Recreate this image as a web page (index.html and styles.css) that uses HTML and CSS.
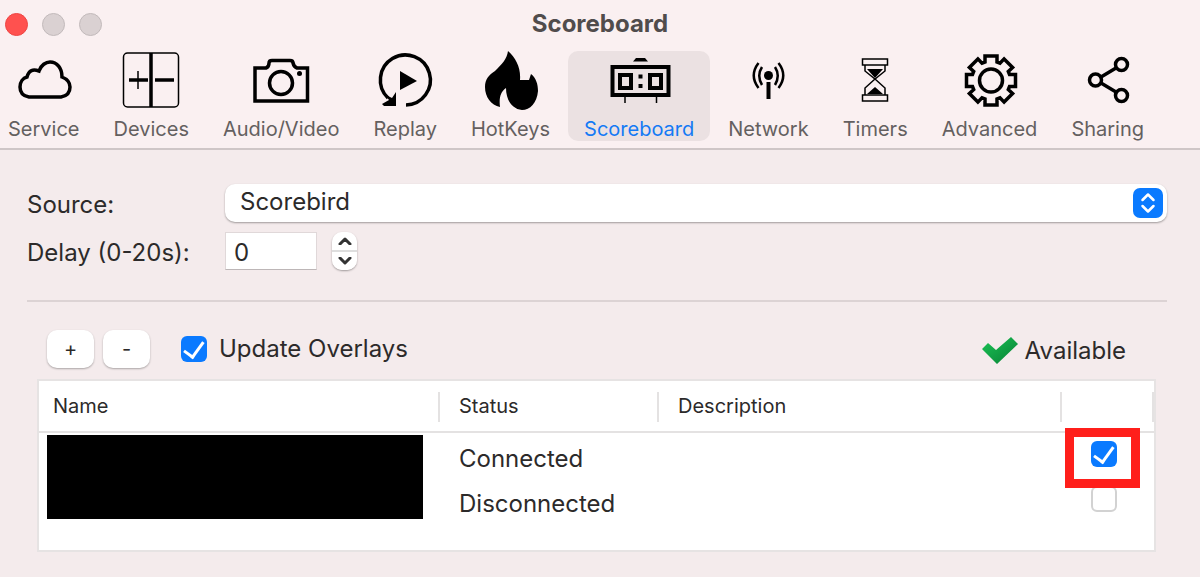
FILE: index.html
```html
<!DOCTYPE html>
<html lang="en">
  <head>
    <meta charset="UTF-8" />
    <meta name="viewport" content="width=device-width, initial-scale=1.0" />
    <title>Scoreboard</title>
    <link rel="stylesheet" href="styles.css" />
  </head>
  <body>
    <header class="window-header">
      <div class="title-bar">
        <div class="window-controls">
          <button class="dot dot-close" type="button" aria-label="Close"></button>
          <button class="dot" type="button" aria-label="Minimize"></button>
          <button class="dot" type="button" aria-label="Zoom"></button>
        </div>
        <h1 class="window-title">Scoreboard</h1>
      </div>

      <nav class="tabs">
        <a class="tab" href="#service">
          <svg class="tab-icon" viewBox="0 0 60 60">
            <path class="line" d="M15 46C9 45 6 41 6 36C6 31 9 27 13 26C15 19 19 18 25 20C27 14 32 11 36 11C43 11 48 17 48 26C53 28 56 31 56 36C56 42 53 45 47 46Z" />
          </svg>
          <span>Service</span>
        </a>
        <a class="tab" href="#devices">
          <svg class="tab-icon" viewBox="0 0 60 60">
            <rect class="line thin" x="2.5" y="2" width="55" height="54" rx="4" />
            <path class="line" d="M30 2V56M8 29H27M34 29H53" />
            <path class="line thin" d="M17 20V38" />
          </svg>
          <span>Devices</span>
        </a>
        <a class="tab" href="#audio-video">
          <svg class="tab-icon" viewBox="0 0 60 60">
            <path class="line" d="M4 17H15Q18 16 18 12Q18 9.500 21 9.500H39Q42 9.500 42 12Q43 16 46 17H56.500V50H4Z" />
            <circle class="line" cx="30" cy="32" r="11.500" />
            <circle cx="48.500" cy="22.500" r="2.500" />
          </svg>
          <span>Audio/Video</span>
        </a>
        <a class="tab" href="#replay">
          <svg class="tab-icon" viewBox="0 0 60 60">
            <path class="line" d="M31 54A25 25 0 1 0 13 47" />
            <path d="M7 53L14 49L9 43L17 47L21 41V55H9Z" />
            <path d="M25 20L42 30L25 39Z" />
          </svg>
          <span>Replay</span>
        </a>
        <a class="tab" href="#hotkeys">
          <svg class="tab-icon" viewBox="0 0 60 60">
            <path d="M27 0C35 7 40 17 39 29H48L50 23C55 27 57 33 57 40C56 52 49 59 41 59C31 58 25 49 25 37C19 41 18 48 19 56C10 54 4 46 4 36C4 28 8 24 14 20C21 13 26 8 27 0Z" />
          </svg>
          <span>HotKeys</span>
        </a>
        <a class="tab tab-active" href="#scoreboard" aria-current="page">
          <svg class="tab-icon" viewBox="0 0 60 60">
            <path d="M24 10.500L27 7H36L39 10.500Z" />
            <rect class="line thick" x="3.500" y="16" width="56" height="28" />
            <rect class="line thick" x="11" y="24" width="11" height="13" />
            <rect class="line thick" x="41" y="24" width="11" height="13" />
            <path d="M29.500 23.500h4v4h-4zM29.500 33h4v4h-4z" />
            <path class="line thin" d="M16 46V52M47.500 46V52" />
          </svg>
          <span>Scoreboard</span>
        </a>
        <a class="tab" href="#network">
          <svg class="tab-icon" viewBox="0 0 60 60">
            <circle cx="30.500" cy="24.500" r="4.500" />
            <rect x="28.500" y="31" width="4" height="17" />
            <path class="line medium" d="M24 16Q18.500 24.500 24 34M37 16Q42.500 24.500 37 34M20.500 12Q11 24.500 20.500 37M40.500 12Q50 24.500 40.500 37" />
          </svg>
          <span>Network</span>
        </a>
        <a class="tab" href="#timers">
          <svg class="tab-icon" viewBox="0 0 60 60">
            <path class="line thin" d="M17.500 8H42.500V14H17.500ZM20 14V20L30 28L40 20V14M30 28L20 37V44M30 28L40 37V44M17.500 50V44H42.500V50Z" />
            <path d="M22 18H38L30 27ZM22 43L30 36L38 43Z" />
          </svg>
          <span>Timers</span>
        </a>
        <a class="tab" href="#advanced">
          <svg class="tab-icon" viewBox="0 0 60 60">
            <g transform="translate(31 29.500)">
              <path class="line" d="M-6-24.500H6V-18.500L9-17.300L13.100-21.600L21.600-13.100L17.300-9L18.500-6H24.500V6H18.500L17.300 9L21.600 13.100L13.100 21.600L9 17.300L6 18.500V24.500H-6V18.500L-9 17.300L-13.100 21.600L-21.600 13.100L-17.300 9L-18.500 6H-24.500V-6H-18.500L-17.300-9L-21.600-13.100L-13.100-21.600L-9-17.300L-6-18.500Z" />
              <circle class="line" r="11.500" />
            </g>
          </svg>
          <span>Advanced</span>
        </a>
        <a class="tab" href="#sharing">
          <svg class="tab-icon" viewBox="0 0 60 60">
            <circle class="line" cx="17.500" cy="29" r="6" />
            <circle class="line" cx="43.500" cy="13.500" r="6" />
            <circle class="line" cx="43.500" cy="44.500" r="6" />
            <path class="line" d="M23 26L38 17M23 32L38 41" />
          </svg>
          <span>Sharing</span>
        </a>
      </nav>
    </header>

    <main class="content">
      <form class="settings">
        <label class="settings-label" for="source">Source:</label>
        <div class="select-wrap">
          <select class="select" id="source">
            <option>Scorebird</option>
          </select>
          <svg class="select-arrows" viewBox="0 0 30 30">
            <path d="M9.500 12L15 6.500L20.500 12M9.500 18L15 23.500L20.500 18" />
          </svg>
        </div>

        <label class="settings-label" for="delay">Delay (0-20s):</label>
        <div class="delay">
          <input class="delay-input" id="delay" type="text" value="0" />
          <div class="stepper">
            <button class="stepper-btn" type="button" aria-label="Increase">
              <svg viewBox="0 0 14 8"><path d="M2 7L7 2L12 7" /></svg>
            </button>
            <button class="stepper-btn" type="button" aria-label="Decrease">
              <svg viewBox="0 0 14 8"><path d="M2 1L7 6L12 1" /></svg>
            </button>
          </div>
        </div>
      </form>

      <section class="overlays">
        <div class="overlay-bar">
          <button class="small-btn" type="button">+</button>
          <button class="small-btn" type="button">-</button>
          <label class="update-label">
            <input class="checkbox" type="checkbox" checked />
            Update Overlays
          </label>
          <div class="availability">
            <svg class="available-icon" viewBox="0 0 36 28">
              <defs>
                <linearGradient id="green" x1="0" y1="0" x2="1" y2="1">
                  <stop offset="0" stop-color="#1bc455" />
                  <stop offset="1" stop-color="#087f35" />
                </linearGradient>
              </defs>
              <path fill="url(#green)" d="M0 12L6 6L14 13L29 0L36 7L15 27Z" />
            </svg>
            <span>Available</span>
          </div>
        </div>

        <div class="table-box">
          <table class="devices">
            <thead>
              <tr>
                <th class="col-name">Name</th>
                <th class="col-status">Status</th>
                <th>Description</th>
                <th class="col-check"></th>
              </tr>
            </thead>
            <tbody>
              <tr>
                <td class="name-cell" rowspan="2"><div class="redacted"></div></td>
                <td class="status-cell">Connected</td>
                <td></td>
                <td class="check-cell">
                  <input class="checkbox" type="checkbox" aria-label="Use connected device" checked />
                  <div class="highlight"></div>
                </td>
              </tr>
              <tr>
                <td class="status-cell">Disconnected</td>
                <td></td>
                <td class="check-cell">
                  <input class="checkbox" type="checkbox" aria-label="Use disconnected device" />
                </td>
              </tr>
            </tbody>
          </table>
        </div>
      </section>
    </main>
  </body>
</html>
```
FILE: styles.css
```css
:root {
  --clr-header: #faf0f1;
  --clr-bg: #f4ebec;
  --clr-text: #2c2a2a;
  --clr-muted: #646060;
  --clr-line: #e4e2e2;
  --clr-blue: #0a7aff;
}

* {
  margin: 0;
  padding: 0;
  box-sizing: border-box;
}

body {
  font-family: Inter, "Helvetica Neue", sans-serif;
  font-size: 24px;
  line-height: 30px;
  background-color: var(--clr-bg);
  color: var(--clr-text);
  min-height: 100vh;
}

button,
input,
select {
  font: inherit;
  color: inherit;
  border: 0;
}

/* title bar and tabs */
.window-header {
  background-color: var(--clr-header);
  border-bottom: 2px solid #cfc6c7;
  padding-bottom: 7px;
}

.title-bar {
  display: grid;
  grid-template-columns: 1fr auto 1fr;
  align-items: center;
  height: 51px;
  padding: 0 5px 3px;
}

.window-controls {
  display: flex;
  gap: 14px;
}

.dot {
  width: 23px;
  height: 23px;
  border-radius: 50%;
  background-color: #dad1d2;
  border: 1px solid #c2babb;
}

.dot-close {
  background-color: #ff514f;
  border-color: #ee4543;
}

.window-title {
  font-size: 24px;
  font-weight: 700;
  color: #504c4c;
}

.tabs {
  display: flex;
  gap: 34px;
  padding: 0 8px;
}

.tab {
  display: flex;
  flex-direction: column;
  align-items: center;
  gap: 6px;
  font-size: 20px;
  line-height: 24px;
  color: var(--clr-muted);
  text-decoration: none;
}

.tab-active {
  background-color: #ebe1e2;
  color: #147af5;
  border-radius: 10px;
  padding: 0 16px;
  margin: 0 -16px;
}

.tab-icon {
  width: 60px;
  height: 60px;
  overflow: visible;
  fill: #000;
}

.line {
  fill: none;
  stroke: #000;
  stroke-width: 3.5;
}

.thin {
  stroke-width: 1.5;
}

.medium {
  stroke-width: 2.5;
}

.thick {
  stroke-width: 4;
}

/* source and delay */
.content {
  padding: 34px 33px 24px 27px;
}

.settings {
  display: grid;
  grid-template-columns: 198px 1fr;
  row-gap: 10px;
  padding-bottom: 30px;
  border-bottom: 2px solid #dcd3d4;
}

.settings-label {
  line-height: 34px;
  padding-top: 4px;
}

.select-wrap {
  position: relative;
  height: 38px;
}

.select {
  appearance: none;
  width: 100%;
  height: 38px;
  padding: 0 48px 2px 15px;
  background-color: #fff;
  border-radius: 10px;
  box-shadow: 0 1px 2px rgba(0, 0, 0, 0.35);
}

.select-arrows {
  position: absolute;
  top: 4px;
  right: 4px;
  width: 30px;
  height: 30px;
  border-radius: 7px;
  background-color: var(--clr-blue);
  fill: none;
  stroke: #fff;
  stroke-width: 2.5;
  stroke-linecap: round;
  stroke-linejoin: round;
  pointer-events: none;
}

.delay {
  display: flex;
  gap: 15px;
}

.delay-input {
  width: 92px;
  height: 38px;
  padding: 2px 8px 0;
  background-color: #fff;
  border: 1px solid #e0d8d9;
  border-bottom-color: #bdb6b7;
}

.stepper {
  display: flex;
  flex-direction: column;
  width: 25px;
  height: 38px;
  border-radius: 10px;
  overflow: hidden;
  box-shadow: 0 1px 2px rgba(0, 0, 0, 0.35);
}

.stepper-btn {
  flex: 1;
  display: flex;
  justify-content: center;
  align-items: center;
  background-color: #fff;
}

.stepper-btn + .stepper-btn {
  border-top: 2px solid #dedede;
}

.stepper-btn svg {
  width: 14px;
  height: 8px;
  fill: none;
  stroke: #333;
  stroke-width: 3;
  stroke-linecap: round;
  stroke-linejoin: round;
}

/* overlays */
.overlays {
  padding: 28px 11px 0 10px;
}

.overlay-bar {
  display: flex;
  align-items: center;
  gap: 9px;
  padding: 0 30px 11px 10px;
}

.small-btn {
  width: 47px;
  height: 38px;
  font-size: 20px;
  background-color: #fff;
  border-radius: 10px;
  box-shadow: 0 1px 2px rgba(0, 0, 0, 0.3);
}

.update-label {
  display: flex;
  align-items: center;
  gap: 12px;
  margin-left: 22px;
}

.checkbox {
  appearance: none;
  position: relative;
  display: block;
  width: 26px;
  height: 26px;
  border: 2px solid #d2d2d2;
  border-radius: 6px;
  background-color: #fff;
}

.checkbox:checked {
  border: 0;
  background-color: var(--clr-blue);
}

.checkbox:checked::after {
  content: "";
  position: absolute;
  top: 3px;
  left: 9px;
  width: 9px;
  height: 17px;
  border: solid #fff;
  border-width: 0 3px 3px 0;
  transform: rotate(36deg);
  transform-origin: 60% 30%;
}

.availability {
  display: flex;
  align-items: center;
  gap: 7px;
  margin-left: auto;
  padding-top: 4px;
}

.available-icon {
  width: 36px;
  height: 28px;
}

.table-box {
  background-color: #fff;
  border: 2px solid #e6e3e3;
  padding-bottom: 27px;
}

.devices {
  width: 100%;
  table-layout: fixed;
  border-spacing: 0;
}

.devices th {
  position: relative;
  height: 52px;
  padding: 0 19px;
  border-bottom: 2px solid var(--clr-line);
  font-size: 20px;
  font-weight: 400;
  text-align: left;
}

.devices th::after {
  content: "";
  position: absolute;
  top: 11px;
  right: 0;
  width: 2px;
  height: 30px;
  background-color: var(--clr-line);
}

.devices .col-name {
  width: 401px;
  padding-left: 14px;
}

.col-status {
  width: 219px;
}

.col-check {
  width: 92px;
}

.devices td {
  height: 45px;
}

.name-cell {
  vertical-align: top;
  padding: 2px 17px 0 8px;
}

.redacted {
  height: 84px;
  background-color: #000;
}

.status-cell {
  padding: 6px 19px 0;
}

.check-cell {
  position: relative;
  padding: 0 0 4px 29px;
}

.highlight {
  position: absolute;
  top: -5px;
  left: 3px;
  width: 75px;
  height: 60px;
  border: 9px solid #ff1f1b;
  z-index: 1;
  pointer-events: none;
}
```
